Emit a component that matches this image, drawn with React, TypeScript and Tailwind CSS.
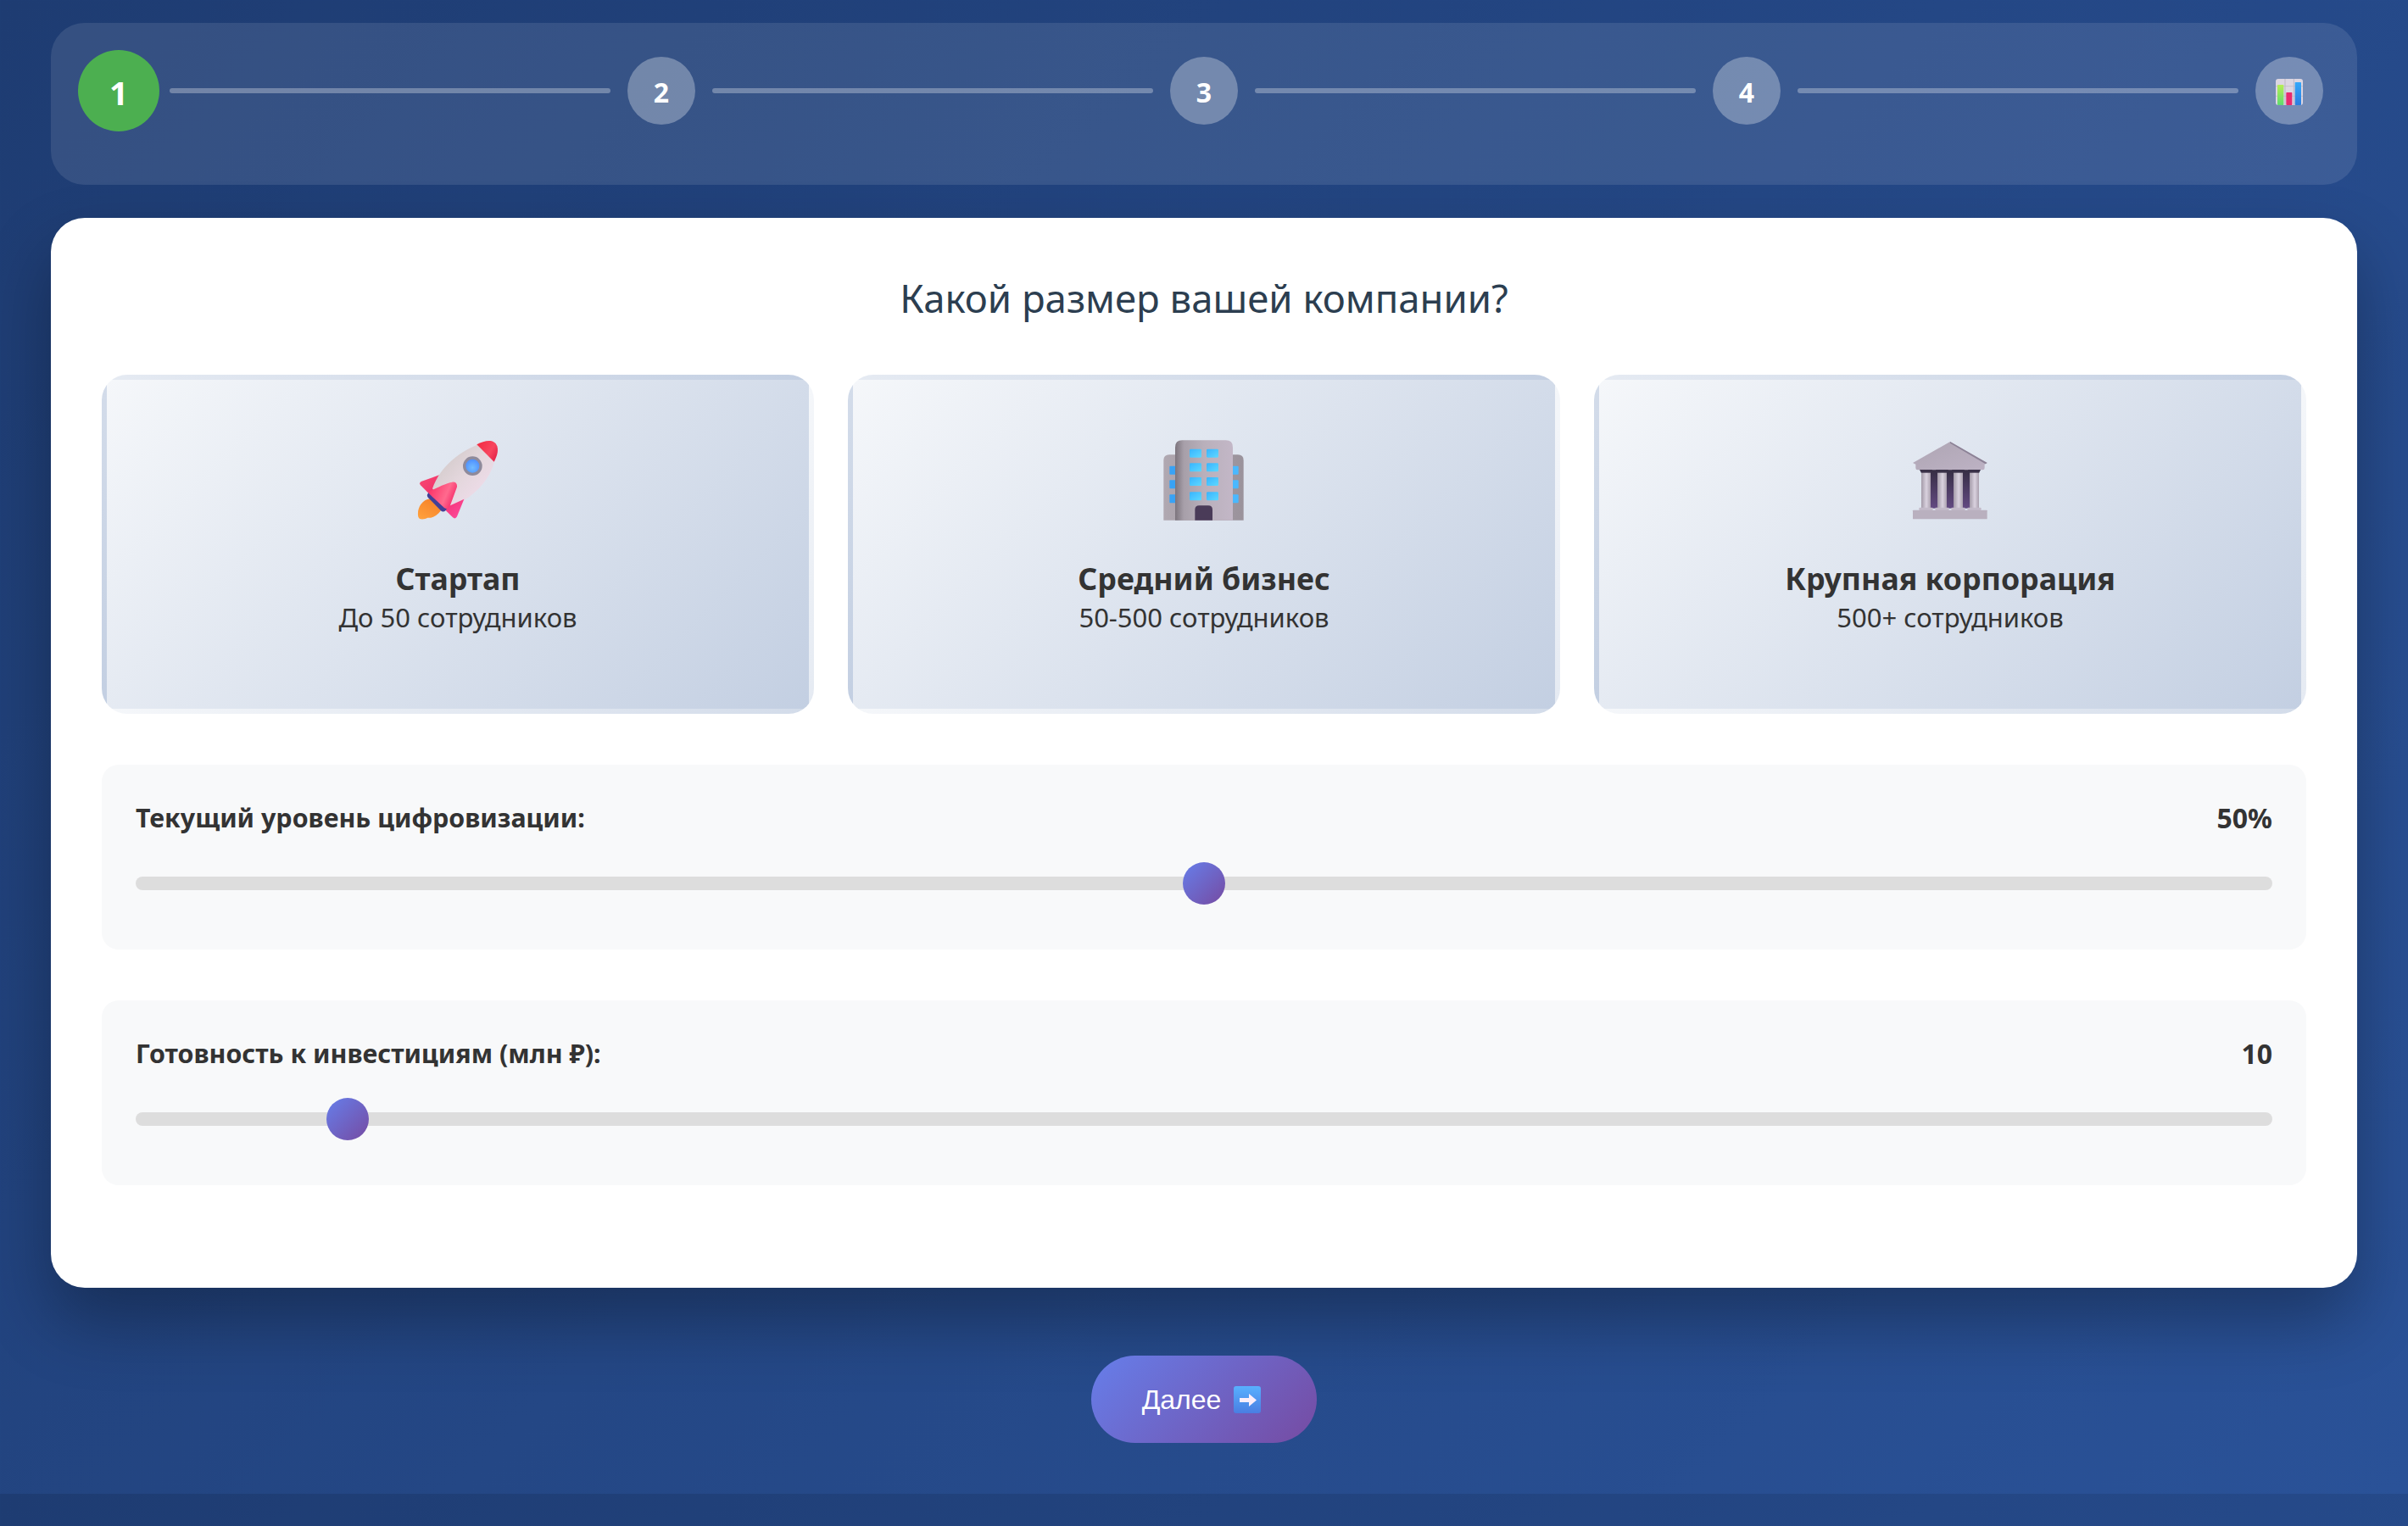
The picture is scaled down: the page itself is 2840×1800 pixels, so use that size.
import React from "react";

const Rocket = () => (
  <svg width="100" height="100" viewBox="60 50 300 300" aria-label="rocket">
    <defs>
      <linearGradient id="rb" x1="0" y1="0" x2="1" y2="1">
        <stop offset="0" stopColor="#c9c3c0" />
        <stop offset="0.5" stopColor="#e4d7dd" />
        <stop offset="1" stopColor="#f6dff2" />
      </linearGradient>
      <linearGradient id="rn" x1="0" y1="0" x2="1" y2="0.6">
        <stop offset="0" stopColor="#f2283f" />
        <stop offset="0.7" stopColor="#f8465f" />
        <stop offset="1" stopColor="#e82a4d" />
      </linearGradient>
      <linearGradient id="rf" x1="0" y1="0" x2="1" y2="0.4">
        <stop offset="0" stopColor="#fb2a62" />
        <stop offset="0.7" stopColor="#ff6a8e" />
        <stop offset="1" stopColor="#f72f6c" />
      </linearGradient>
      <linearGradient id="rr" x1="0" y1="0" x2="1" y2="1">
        <stop offset="0" stopColor="#f84a72" />
        <stop offset="1" stopColor="#f02c6a" />
      </linearGradient>
      <linearGradient id="rt" x1="0" y1="0" x2="1" y2="1">
        <stop offset="0" stopColor="#f2306e" />
        <stop offset="1" stopColor="#ff4ea2" />
      </linearGradient>
      <linearGradient id="rl" x1="0.8" y1="0" x2="0.2" y2="1">
        <stop offset="0" stopColor="#f58028" />
        <stop offset="1" stopColor="#ffa03c" />
      </linearGradient>
      <radialGradient id="rw" cx="0.5" cy="0.62" r="0.6">
        <stop offset="0" stopColor="#72bcff" />
        <stop offset="1" stopColor="#4f90ff" />
      </radialGradient>
    </defs>
    <path d="M80 203 Q72 208 78 216 L118 256 L144 180 Z" fill="url(#rr)" />
    <path d="M292 68 C225 92 148 145 120 228 L172 300 C262 266 325 198 340 128 Z" fill="url(#rb)" />
    <path d="M277 72 C305 58 338 50 349 78 C355 98 346 118 338 133 Z" fill="url(#rn)" />
    <circle cx="262" cy="148" r="34" fill="#8f8a9b" />
    <circle cx="262" cy="148" r="24" fill="url(#rw)" />
    <path d="M232 265 L207 327 Q201 338 192 330 L160 298 Z" fill="url(#rt)" />
    <path d="M70 328 C64 302 80 268 112 264 L150 306 C136 325 118 334 103 331 C92 337 74 340 70 328 Z" fill="url(#rl)" />
    <path d="M114 252 L158 297" stroke="#423f96" strokeWidth="24" strokeLinecap="round" />
    <path d="M112 236 C134 226 170 208 190 205 C203 203 210 213 206 225 L182 290 Q174 304 162 296 L108 246 Q104 240 112 236 Z" fill="url(#rf)" />
  </svg>
);

const Building = () => {
  const rows = [88, 138, 188, 240];
  const side = [148, 198, 249];
  return (
    <svg width="100" height="100" viewBox="90 50 300 300" aria-label="building">
      <defs>
        <linearGradient id="bm" x1="0" y1="0" x2="1" y2="0">
          <stop offset="0" stopColor="#7c747d" />
          <stop offset="0.15" stopColor="#a79fa9" />
          <stop offset="0.5" stopColor="#b9b0bb" />
          <stop offset="1" stopColor="#c3b7c7" />
        </linearGradient>
        <linearGradient id="bs" x1="0" y1="0" x2="1" y2="0">
          <stop offset="0" stopColor="#b0a8b1" />
          <stop offset="1" stopColor="#9a929b" />
        </linearGradient>
        <linearGradient id="bw" x1="0" y1="0" x2="1" y2="1">
          <stop offset="0" stopColor="#38b4ff" />
          <stop offset="1" stopColor="#5ed8ff" />
        </linearGradient>
      </defs>
      <path d="M97 340 V128 Q97 108 117 108 H360 Q380 108 380 128 V340 Z" fill="url(#bs)" />
      {side.map((y) => (
        <g key={y}>
          <rect x="118" y={y} width="22" height="30" rx="3" fill="#38a2f5" />
          <rect x="340" y={y} width="22" height="30" rx="3" fill="#4ab8ff" />
        </g>
      ))}
      <path d="M138 340 V82 Q138 57 163 57 H317 Q342 57 342 82 V340 Z" fill="url(#bm)" />
      {rows.map((y) => (
        <g key={y}>
          <rect x="189" y={y} width="42" height="30" rx="4" fill="url(#bw)" />
          <rect x="249" y={y} width="42" height="30" rx="4" fill="url(#bw)" />
        </g>
      ))}
      <path d="M208 340 V303 Q208 288 223 288 H255 Q270 288 270 303 V340 Z" fill="#4a3b58" />
    </svg>
  );
};

const Bank = () => {
  const cols = [108, 165, 222, 279];
  return (
    <svg width="100" height="100" viewBox="60 50 300 300" aria-label="classical building">
      <defs>
        <linearGradient id="kc" x1="0" y1="0" x2="1" y2="0">
          <stop offset="0" stopColor="#a39aa8" />
          <stop offset="0.55" stopColor="#dad2df" />
          <stop offset="1" stopColor="#aaa0ae" />
        </linearGradient>
        <linearGradient id="kd" x1="0" y1="0" x2="0" y2="1">
          <stop offset="0" stopColor="#352d42" />
          <stop offset="1" stopColor="#634a82" />
        </linearGradient>
        <linearGradient id="kp" x1="0" y1="0" x2="1" y2="1">
          <stop offset="0" stopColor="#aea5b3" />
          <stop offset="1" stopColor="#bdb2c4" />
        </linearGradient>
      </defs>
      <rect x="135" y="158" width="150" height="140" fill="url(#kd)" />
      <path d="M78 137 L210 62 L341 137 L332 142 V155 Q332 162 325 162 H95 Q88 162 88 155 V142 Z" fill="url(#kp)" />
      <path d="M210 62 L341 137 L335 141 L210 67 Z" fill="#8c8296" />
      {cols.map((x) => (
        <g key={x}>
          <path d={`M${x - 6} 161 H${x + 39} L${x + 33} 173 H${x} Z`} fill="#3a3148" />
          <rect x={x} y="172" width="33" height="124" fill="url(#kc)" />
          <rect x={x - 8} y="295" width="49" height="10" rx="3" fill="#c3bac9" />
        </g>
      ))}
      <rect x="78" y="304" width="263" height="32" rx="2" fill="#b9b0bf" />
    </svg>
  );
};

const Chart = () => (
  <svg width="40" height="40" viewBox="180 111 120 120" aria-label="chart">
    <defs>
      <linearGradient id="cg" x1="0" y1="0" x2="0" y2="1">
        <stop offset="0" stopColor="#b6ee55" />
        <stop offset="1" stopColor="#5fdc6f" />
      </linearGradient>
      <linearGradient id="cb" x1="0" y1="0" x2="0" y2="1">
        <stop offset="0" stopColor="#35a8fa" />
        <stop offset="1" stopColor="#2a7de0" />
      </linearGradient>
    </defs>
    <rect x="192" y="129" width="96" height="93" rx="9" fill="#dcd6e2" />
    <path d="M192 155 H288 M192 190 H288" stroke="#c6c0cc" strokeWidth="3" />
    <path d="M225 129 V222 M256 129 V222" stroke="#bdb7c4" strokeWidth="3" />
    <rect x="198" y="150" width="22" height="72" rx="2" fill="url(#cg)" />
    <rect x="229" y="177" width="21" height="45" rx="2" fill="#e92a6e" />
    <rect x="260" y="141" width="22" height="81" rx="2" fill="url(#cb)" />
  </svg>
);

const Arrow = () => (
  <svg width="32" height="32" viewBox="0 0 32 32" aria-label="arrow">
    <defs>
      <linearGradient id="ab" x1="0" y1="0" x2="0" y2="1">
        <stop offset="0" stopColor="#58b0ff" />
        <stop offset="1" stopColor="#4a7ee2" />
      </linearGradient>
    </defs>
    <rect x="0" y="0" width="32" height="32" rx="3" fill="url(#ab)" />
    <path d="M7 14 H18 V9 L27 16.5 L18 24 V19 H7 Z" fill="#fbeefa" />
  </svg>
);

const Step = ({ children }: { children: React.ReactNode }) => (
  <div className="flex h-20 w-20 shrink-0 items-center justify-center rounded-full bg-white/30 text-[32px] font-bold text-white">
    {children}
  </div>
);

const Line = () => <div className="mx-5 h-1.5 flex-1 rounded-sm bg-white/30" />;

const Option = ({ icon, title, sub }: { icon: React.ReactNode; title: string; sub: string }) => (
  <div className="flex h-[400px] flex-col items-center rounded-[30px] border-[6px] border-transparent bg-[linear-gradient(135deg,#f5f7fa_0%,#c3cfe2_100%)] pt-[69px] text-[#333]">
    {icon}
    <div className="mt-[39px] text-[35.7px] leading-[52px] font-bold">{title}</div>
    <div className="mt-[-2px] text-[31px] leading-[44px]">{sub}</div>
  </div>
);

const Slider = ({ label, value, min, max, shown }: { label: string; value: number; min: number; max: number; shown: string }) => (
  <div className="mb-[60px] rounded-[20px] bg-[#f8f9fa] px-10 pt-[41px] pb-[70px]">
    <div className="mb-[47px] flex items-center justify-between text-[32px] leading-[44px] font-bold text-[#333]">
      <span className="text-[30.4px]">{label}</span>
      <span>{shown}</span>
    </div>
    <input
      type="range"
      readOnly
      min={min}
      max={max}
      value={value}
      className="block h-4 w-full appearance-none rounded-[10px] bg-[#ddd] outline-none [&::-webkit-slider-thumb]:h-[50px] [&::-webkit-slider-thumb]:w-[50px] [&::-webkit-slider-thumb]:appearance-none [&::-webkit-slider-thumb]:rounded-full [&::-webkit-slider-thumb]:bg-[linear-gradient(135deg,#667eea_0%,#764ba2_100%)]"
    />
  </div>
);

export default function App() {
  return (
    <div className="h-[1800px] w-full overflow-hidden bg-[linear-gradient(135deg,#1e3c72_0%,#2a5298_100%)] bg-size-[100%_1762px] px-[60px] pt-[27px] font-['Noto_Sans','Open_Sans',sans-serif]">
      <div className="mb-[39px] flex items-center rounded-[40px] bg-white/10 px-10 pt-10 pb-[71px]">
        <div className="flex h-20 w-20 shrink-0 scale-120 items-center justify-center rounded-full bg-[#4caf50] text-[32px] font-bold text-white">
          <span className="pt-1">1</span>
        </div>
        <Line />
        <Step>
          <span className="pt-1">2</span>
        </Step>
        <Line />
        <Step>
          <span className="pt-1">3</span>
        </Step>
        <Line />
        <Step>
          <span className="pt-1">4</span>
        </Step>
        <Line />
        <Step>
          <Chart />
        </Step>
      </div>

      <div className="rounded-[40px] bg-white px-[60px] pt-[60px] pb-[61px] shadow-[0_40px_80px_rgba(0,0,0,0.3)]">
        <h2 className="mb-[60px] pt-[3px] text-center text-[45.5px] leading-[62px] text-[#2c3e50]">Какой размер вашей компании?</h2>
        <div className="mb-[60px] grid grid-cols-3 gap-10">
          <Option icon={<Rocket />} title="Стартап" sub="До 50 сотрудников" />
          <Option icon={<Building />} title="Средний бизнес" sub="50-500 сотрудников" />
          <Option icon={<Bank />} title="Крупная корпорация" sub="500+ сотрудников" />
        </div>
        <Slider label="Текущий уровень цифровизации:" value={50} min={0} max={100} shown="50%" />
        <Slider label="Готовность к инвестициям (млн ₽):" value={10} min={1} max={100} shown="10" />
      </div>

      <div className="mt-20 flex justify-center">
        <button className="flex h-[103px] items-center gap-[15px] rounded-full bg-[linear-gradient(135deg,#667eea_0%,#764ba2_100%)] pr-[66px] pl-[60px] font-['Liberation_Sans',sans-serif] text-[32px] text-white">
          Далее
          <Arrow />
        </button>
      </div>
    </div>
  );
}
